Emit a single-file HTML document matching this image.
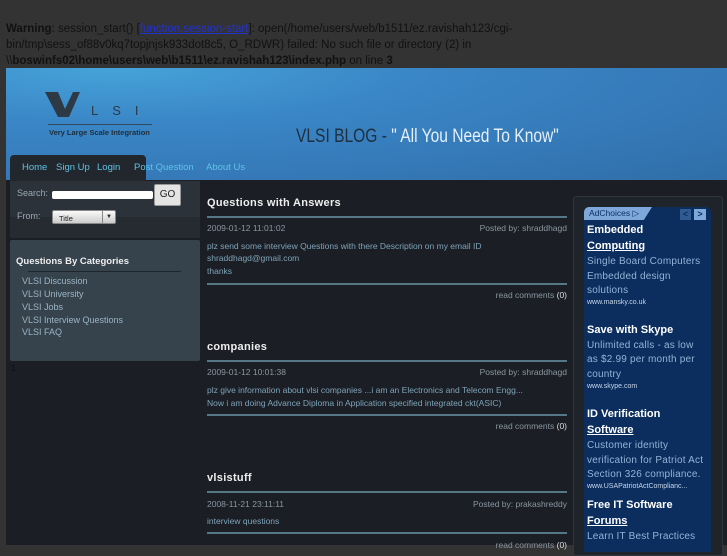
<!DOCTYPE html>
<html><head><meta charset="utf-8">
<style>
*{margin:0;padding:0;box-sizing:border-box}
body{width:727px;height:545px;overflow:hidden;background:#333;font-family:"Liberation Sans",sans-serif;position:relative;color:#ccc}
.a{position:absolute;white-space:nowrap}
.warn{left:6px;top:21px;font-size:11.5px;line-height:16px;color:#111;white-space:normal;width:520px;position:absolute}
.warn a{color:#2233cc;text-decoration:underline}
#wrap{position:absolute;left:6px;top:68px;width:721px;height:477px;background:#1b1f25}
#hdr{position:absolute;left:6px;top:68px;width:721px;height:112px;background:radial-gradient(ellipse at 15% 0%,#46a3d9 0%,#3a86c6 35%,#3579b8 70%,#2f6ea8 100%)}
.nav{left:10px;top:155px;width:136px;height:26px;background:#22272d;border-radius:4px 4px 0 0}
.nl{font-size:9.5px;color:#5ec3e6;top:162px}
.srch{left:10px;top:181px;width:190px;height:36px;background:#2b3239}
.strip{left:10px;top:217px;width:190px;height:21px;background:#252b31}
.cat{left:10px;top:240px;width:190px;height:121px;background:#36434d;border-radius:2px}
.cl{font-size:9px;color:#9cb4c4;left:22px}
.pt{left:207px;font-size:11px;font-weight:bold;color:#eee;letter-spacing:.3px}
.hr{left:207px;width:360px;height:2px;background:#557786}
.d{font-size:8.5px;color:#8a95a0}
.b{font-size:8.5px;color:#7ea3b8;left:207px}
.rc{font-size:8.5px;color:#8a95a0;right:160px}
.rc b{color:#ddd;font-weight:normal}
.adout{left:573px;top:196px;width:150px;height:360px;background:#1f242a;border:1px solid #30363d;border-radius:3px}
.ad{left:584px;top:207px;width:127px;height:345px;background:#0b2e5f;border-radius:5px 5px 0 0}
.ah{font-size:11px;font-weight:bold;color:#fff;left:587px}
.ah.u{text-decoration:underline}
.ds{font-size:10px;color:#93b3d6;left:587px;letter-spacing:.2px}
.url{font-size:7px;color:#c7d6ea;left:587px}
</style></head><body>
<div class="warn"><b>Warning</b>: session_start() [<a>function.session-start</a>]: open(/home/users/web/b1511/ez.ravishah123/cgi-bin/tmp\sess_of88v0kq7topjnjsk933dot8c5, O_RDWR) failed: No such file or directory (2) in \\<b>boswinfs02\home\users\web\b1511\ez.ravishah123\index.php</b> on line <b>3</b></div>
<div id="wrap"></div>
<div id="hdr"></div>
<svg class="a" style="left:44px;top:91px" width="40" height="28"><polygon points="1,1 14,1 21,18 29,1 36,1 25,26 14,26" fill="#2d3a45"/></svg>
<div class="a" style="left:91px;top:103px;font-size:13px;color:#2d3a45;letter-spacing:14px">LSI</div>
<div class="a" style="left:48px;top:124px;width:104px;height:1px;background:#2d4a60"></div>
<div class="a" style="left:49px;top:128px;font-size:7.5px;color:#1e2e3c;font-weight:bold">Very Large Scale Integration</div>
<div class="a" style="left:296px;top:126px;font-size:19px;color:#1f2f3e;transform:scaleX(.82);transform-origin:left">VLSI BLOG - <span style="color:#e6f0f8">" All You Need To Know"</span></div>
<div class="a nav"></div>
<div class="a nl" style="left:22px">Home</div>
<div class="a nl" style="left:56px">Sign Up</div>
<div class="a nl" style="left:97px">Login</div>
<div class="a nl" style="left:134px">Post Question</div>
<div class="a nl" style="left:206px">About Us</div>
<div class="a srch"></div>
<div class="a strip"></div>
<div class="a" style="left:17px;top:188px;font-size:9px;color:#9aa8b4">Search:</div>
<div class="a" style="left:52px;top:191px;width:101px;height:8px;background:#fff;border-radius:2px"></div>
<div class="a" style="left:154px;top:184px;width:27px;height:22px;background:#e4e4e4;border:1px solid #999;border-radius:2px;font-size:10px;color:#222;text-align:center;line-height:20px">GO</div>
<div class="a" style="left:17px;top:211px;font-size:9px;color:#9aa8b4">From:</div>
<div class="a" style="left:52px;top:210px;width:64px;height:14px;background:linear-gradient(#fafafa,#ccc);border:1px solid #888;border-radius:2px;font-size:7.5px;color:#222;padding:3px 0 0 6px">Title<span style="position:absolute;right:0;top:0;width:13px;height:12px;border-left:1px solid #888;font-size:6px;text-align:center;line-height:12px">▼</span></div>
<div class="a cat"></div>
<div class="a" style="left:16px;top:256px;font-size:9.5px;font-weight:bold;color:#eee">Questions By Categories</div>
<div class="a" style="left:28px;top:271px;width:153px;height:1px;background:#1e252b"></div>
<div class="a cl" style="top:276px">VLSI Discussion</div>
<div class="a cl" style="top:289px">VLSI University</div>
<div class="a cl" style="top:302px">VLSI Jobs</div>
<div class="a cl" style="top:315px">VLSI Interview Questions</div>
<div class="a cl" style="top:327px">VLSI FAQ</div>
<div class="a" style="left:11px;top:363px;font-size:9px;color:#111">1</div>

<div class="a pt" style="top:197px">Questions with Answers</div>
<div class="a hr" style="top:216px"></div>
<div class="a d" style="left:207px;top:223px">2009-01-12 11:01:02</div>
<div class="a d" style="right:160px;top:223px">Posted by: shraddhagd</div>
<div class="a b" style="top:241px">plz send some interview Questions with there Description on my email ID</div>
<div class="a b" style="top:253px">shraddhagd@gmail.com</div>
<div class="a b" style="top:266px">thanks</div>
<div class="a hr" style="top:283px"></div>
<div class="a rc" style="top:290px">read comments <b>(0)</b></div>

<div class="a pt" style="top:341px">companies</div>
<div class="a hr" style="top:360px"></div>
<div class="a d" style="left:207px;top:367px">2009-01-12 10:01:38</div>
<div class="a d" style="right:160px;top:367px">Posted by: shraddhagd</div>
<div class="a b" style="top:385px">plz give information about vlsi companies ...i am an Electronics and Telecom Engg...</div>
<div class="a b" style="top:398px">Now i am doing Advance Diploma in Application specified integrated ckt(ASIC)</div>
<div class="a hr" style="top:414px"></div>
<div class="a rc" style="top:421px">read comments <b>(0)</b></div>

<div class="a pt" style="top:472px">vlsistuff</div>
<div class="a hr" style="top:491px"></div>
<div class="a d" style="left:207px;top:499px">2008-11-21 23:11:11</div>
<div class="a d" style="right:160px;top:499px">Posted by: prakashreddy</div>
<div class="a b" style="top:516px">interview questions</div>
<div class="a hr" style="top:532px"></div>
<div class="a rc" style="top:540px">read comments <b>(0)</b></div>

<div class="a adout"></div>
<div class="a ad"></div>
<div class="a" style="left:584px;top:207px;width:68px;height:13px;background:#7ea8da;border-radius:5px 0 0 0;clip-path:polygon(0 0,100% 0,88% 100%,0 100%);font-size:8.5px;color:#0b2e5f;padding:1px 0 0 5px">AdChoices ▷</div>
<div class="a" style="left:680px;top:209px;width:11px;height:11px;background:#2f5a92;color:#0b2e5f;font-size:9px;text-align:center;line-height:11px;font-weight:bold">&lt;</div>
<div class="a" style="left:694px;top:209px;width:12px;height:11px;background:#7ea8da;color:#0b2e5f;font-size:9px;text-align:center;line-height:11px;font-weight:bold">&gt;</div>
<div class="a ah" style="top:224px">Embedded</div>
<div class="a ah u" style="top:240px">Computing</div>
<div class="a ds" style="top:256px">Single Board Computers</div>
<div class="a ds" style="top:271px">Embedded design</div>
<div class="a ds" style="top:285px">solutions</div>
<div class="a url" style="top:299px">www.mansky.co.uk</div>
<div class="a ah" style="top:324px">Save with Skype</div>
<div class="a ds" style="top:340px">Unlimited calls - as low</div>
<div class="a ds" style="top:354px">as $2.99 per month per</div>
<div class="a ds" style="top:369px">country</div>
<div class="a url" style="top:383px">www.skype.com</div>
<div class="a ah" style="top:408px">ID Verification</div>
<div class="a ah u" style="top:424px">Software</div>
<div class="a ds" style="top:440px">Customer identity</div>
<div class="a ds" style="top:455px">verification for Patriot Act</div>
<div class="a ds" style="top:469px">Section 326 compliance.</div>
<div class="a url" style="top:483px">www.USAPatriotActComplianc...</div>
<div class="a ah" style="top:499px">Free IT Software</div>
<div class="a ah u" style="top:515px">Forums</div>
<div class="a ds" style="top:531px">Learn IT Best Practices</div>
</body></html>
